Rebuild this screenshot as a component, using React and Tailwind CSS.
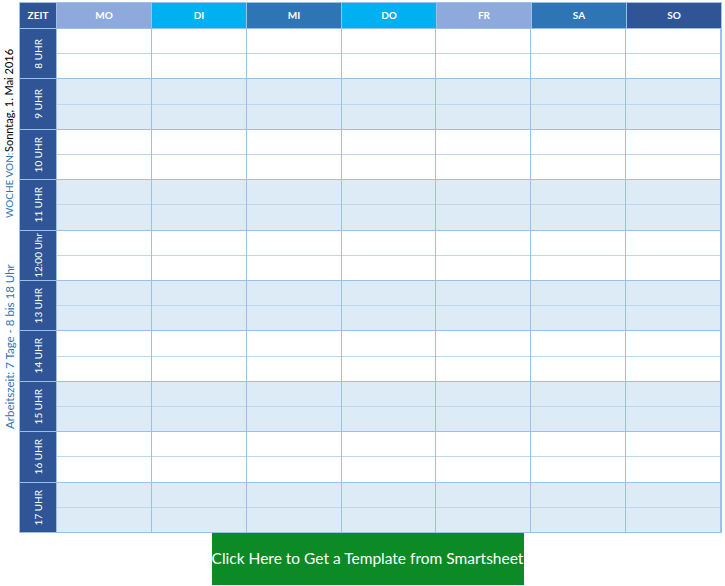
export default function App() {
  const days = [
    ["MO", "bg-[#8EA9DB]"],
    ["DI", "bg-[#00B0F0]"],
    ["MI", "bg-[#2E75B6]"],
    ["DO", "bg-[#00B0F0]"],
    ["FR", "bg-[#8EA9DB]"],
    ["SA", "bg-[#2E75B6]"],
    ["SO", "bg-[#2F5597]"],
  ];
  const hours = ["8 UHR", "9 UHR", "10 UHR", "11 UHR", "12:00 Uhr", "13 UHR", "14 UHR", "15 UHR", "16 UHR", "17 UHR"];
  const vt = "[writing-mode:vertical-rl] rotate-180 whitespace-nowrap";
  return (
    <div className="w-[725px] h-[586px] bg-white flex flex-col" style={{ fontFamily: "Lato, 'Open Sans', sans-serif" }}>
      <div className="flex pt-[2px]">
        <div className="w-[19px] flex flex-col items-center">
          <div className={`${vt} mt-[43px] h-[110px] text-[11px] text-black flex items-center justify-center`}>Sonntag, 1. Mai 2016</div>
          <div className={`${vt} mt-[6px] h-[48px] text-[10px] text-[#2E75B6] flex items-center justify-center`}>WOCHE VON:</div>
          <div className={`${vt} mt-[30px] h-[216px] text-[11.5px] text-[#2E75B6] flex items-center justify-center`}>Arbeitszeit: 7 Tage - 8 bis 18 Uhr</div>
        </div>
        <div className="w-[703px] border border-[#9BC2E6] flex flex-col">
          <div className="flex h-[25px]">
            <div className="w-[37px] bg-[#2F5597] text-white text-[10px] font-bold flex items-center justify-center border-r border-[#9BC2E6]">ZEIT</div>
            {days.map(([d, c]) => (
              <div key={d} className={`flex-1 ${c} text-white text-[10px] font-bold flex items-center justify-center border-r border-[#9BC2E6] last:border-r-0`}>{d}</div>
            ))}
          </div>
          {hours.map((h, i) => (
            <div key={h} className="flex h-[50.4px] border-t border-[#9BC2E6]">
              <div className="w-[37px] bg-[#2F5597] text-white text-[10px] flex items-center justify-center border-r border-[#9BC2E6]">
                <span className={vt}>{h}</span>
              </div>
              {days.map(([d]) => (
                <div key={d} className={`flex-1 flex flex-col border-r border-[#9BC2E6] ${i % 2 ? "bg-[#DDEBF7]" : "bg-white"}`}>
                  <div className="flex-1 border-b border-[#BDD7EE]" />
                  <div className="flex-1" />
                </div>
              ))}
            </div>
          ))}
        </div>
      </div>
      <div className="flex justify-center pl-[10px]">
        <div className="w-[312px] h-[52px] bg-[#0B8A25] text-white text-[15.5px] flex items-center justify-center">Click Here to Get a Template from Smartsheet</div>
      </div>
    </div>
  );
}
